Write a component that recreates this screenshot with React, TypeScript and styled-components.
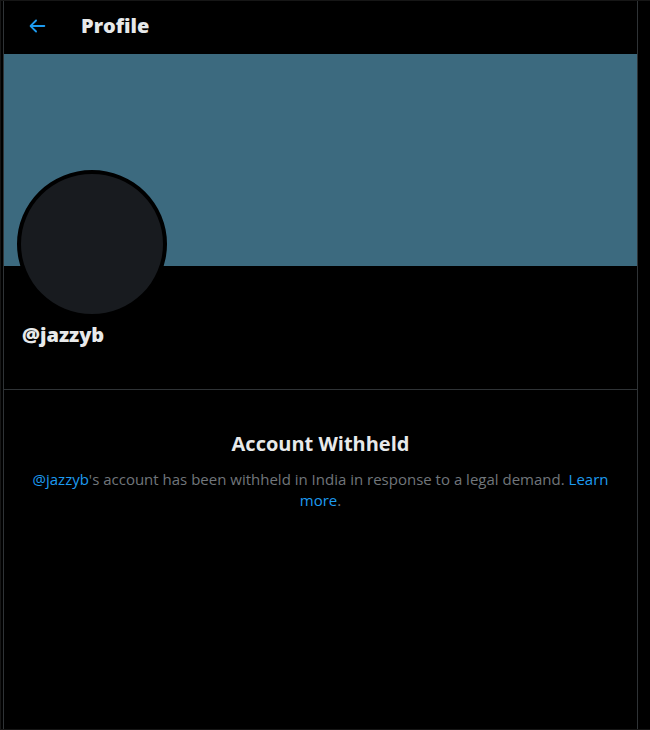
import React from "react";
import styled, { createGlobalStyle } from "styled-components";

const Global = createGlobalStyle`
  html, body {
    margin: 0;
    padding: 0;
    background: #000;
  }
  body {
    font-family: "Open Sans", "Liberation Sans", Arial, sans-serif;
    -webkit-font-smoothing: antialiased;
  }
`;

const Page = styled.div`
  width: 650px;
  height: 730px;
  box-sizing: border-box;
  background: #000;
  border: 1px solid #161616;
  border-right: none;
  padding-left: 2px;
  overflow: hidden;
`;

const Column = styled.main`
  width: 635px;
  height: 100%;
  box-sizing: border-box;
  border-left: 1px solid #2f3336;
  border-right: 1px solid #2f3336;
  display: flex;
  flex-direction: column;
`;

const Header = styled.header`
  height: 53px;
  display: flex;
  align-items: center;
  padding-left: 22px;
  padding-bottom: 3px;
  box-sizing: border-box;
`;

const BackButton = styled.button`
  display: flex;
  align-items: center;
  justify-content: center;
  background: none;
  border: none;
  padding: 0;
  width: 22px;
  height: 22px;
  color: #1d9bf0;
  cursor: pointer;
`;

const Title = styled.h2`
  margin: 0 0 0 33px;
  font-size: 20px;
  font-weight: 800;
  line-height: 24px;
  color: #e7e9ea;
`;

const Banner = styled.div`
  height: 212px;
  background: #3c6a7f;
`;

const ProfileInfo = styled.section`
  padding: 0 13px 42px;
  border-bottom: 1px solid #2f3336;
  display: flex;
  flex-direction: column;
  align-items: flex-start;
`;

const Avatar = styled.div`
  width: 150px;
  height: 148px;
  margin-top: -96px;
  box-sizing: border-box;
  border-radius: 50%;
  border: 4px solid #000;
  background: #181b1f;
`;

const Handle = styled.div`
  margin: 5px 0 0 5px;
  font-size: 20px;
  font-weight: 800;
  line-height: 24px;
  color: #e7e9ea;
`;

const Notice = styled.section`
  padding: 42px 26px 0;
  text-align: center;
`;

const NoticeTitle = styled.h3`
  margin: 0;
  font-size: 20px;
  font-weight: 700;
  line-height: 24px;
  color: #e7e9ea;
`;

const NoticeText = styled.p`
  margin: 13px 0 0;
  font-size: 15px;
  line-height: 21px;
  color: #71767b;
`;

const Link = styled.a`
  color: #1d9bf0;
  text-decoration: none;
`;

export default function App() {
  return (
    <>
      <Global />
      <Page>
        <Column>
          <Header>
            <BackButton aria-label="Back">
              <svg viewBox="0 0 24 24" width="22" height="22" fill="currentColor">
                <path d="M20 11H7.414l4.293-4.293c.39-.39.39-1.023 0-1.414s-1.023-.39-1.414 0l-6 6c-.39.39-.39 1.023 0 1.414l6 6c.195.195.45.293.707.293s.512-.098.707-.293c.39-.39.39-1.023 0-1.414L7.414 13H20c.553 0 1-.447 1-1s-.447-1-1-1z" />
              </svg>
            </BackButton>
            <Title>Profile</Title>
          </Header>
          <Banner />
          <ProfileInfo>
            <Avatar />
            <Handle>@jazzyb</Handle>
          </ProfileInfo>
          <Notice>
            <NoticeTitle>Account Withheld</NoticeTitle>
            <NoticeText>
              <Link href="#">@jazzyb</Link>'s account has been withheld in India in response to a legal demand.{" "}
              <Link href="#">Learn</Link> <Link href="#">more</Link>.
            </NoticeText>
          </Notice>
        </Column>
      </Page>
    </>
  );
}
